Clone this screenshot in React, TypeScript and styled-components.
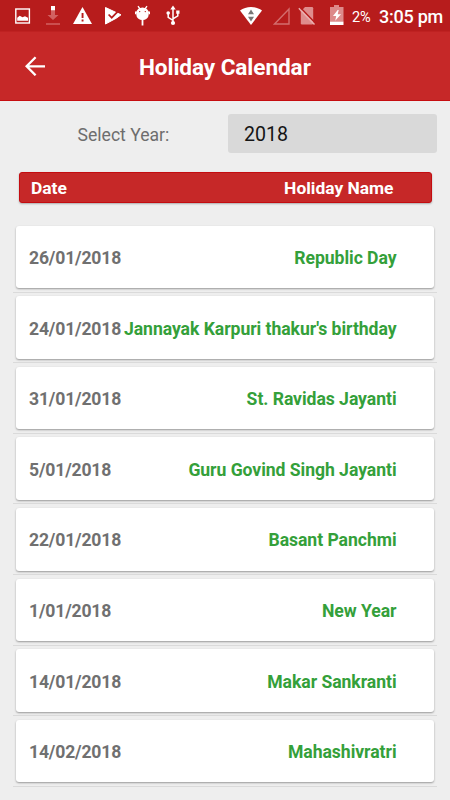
import React from "react";
import styled, { createGlobalStyle } from "styled-components";

const GlobalStyle = createGlobalStyle`
  * { box-sizing: border-box; }
  body { margin: 0; background: #eeeeee; font-family: Roboto, sans-serif; }
`;

const Screen = styled.div`
  width: 450px;
  height: 800px;
  overflow: hidden;
  background: #eeeeee;
`;

const StatusBar = styled.div`
  display: flex;
  align-items: center;
  height: 31px;
  background: #b71c1c;
  color: #fff;
`;

const Glyph = styled.svg<{ $gap: number }>`
  flex: none;
  display: block;
  margin-left: ${(p) => p.$gap}px;
`;

const BatteryText = styled.span`
  width: 20px;
  margin-left: 8px;
  padding-top: 2px;
  font-size: 14.6px;
  letter-spacing: -0.3px;
  white-space: nowrap;
`;

const Clock = styled.span`
  margin-left: 7px;
  padding-top: 2px;
  font-size: 18px;
  font-weight: 500;
  letter-spacing: -0.25px;
  white-space: nowrap;
`;

const AppBar = styled.header`
  display: flex;
  align-items: center;
  height: 70px;
  padding-left: 25px;
  background: #c62828;
  border-bottom: 1px solid #c60d10;
  border-top: 1px solid #bf2121;
`;

const Title = styled.h1`
  margin: 3px 0 0 94px;
  font-size: 22.6px;
  line-height: 28px;
  font-weight: 700;
  letter-spacing: -0.08px;
  color: #fff;
  white-space: nowrap;
`;

const YearRow = styled.div`
  display: flex;
  padding: 13px 13px 0 77.5px;
  height: 71px;
`;

const YearLabel = styled.label`
  width: 150.5px;
  padding-top: 11px;
  font-size: 17.6px;
  line-height: 20px;
  color: #6d6d6d;
`;

const YearField = styled.div`
  width: 209px;
  height: 39px;
  padding-left: 16px;
  border-radius: 3px;
  background: #d9d9d9;
  font-size: 19.6px;
  line-height: 41px;
  color: #151515;
`;

const TableHead = styled.div`
  display: flex;
  justify-content: space-between;
  align-items: center;
  width: 413px;
  height: 31px;
  margin: 0 0 0 18.5px;
  padding: 1px 37px 0 11.5px;
  border: 1px solid #c40c10;
  border-radius: 3px;
  background: #c62828;
  box-shadow: 0 1px 2px rgba(0, 0, 0, 0.28);
  font-size: 17.4px;
  font-weight: 700;
  color: #fff;
`;

const List = styled.div`
  width: 424px;
  margin: 22.7px 0 0 13px;
`;

const Item = styled.div`
  height: 70.6px;
  padding: 0 3px;
`;

const Card = styled.div`
  display: flex;
  justify-content: space-between;
  align-items: center;
  height: 62.6px;
  padding: 2px 37.5px 0 13px;
  border-radius: 3px;
  background: #fff;
  box-shadow: 0 1px 2px rgba(0, 0, 0, 0.36);
  font-size: 17.6px;
  font-weight: 700;
  white-space: nowrap;
`;

const Divider = styled.div`
  height: 1px;
  margin: 3.4px -3px 0;
  background: #dadada;
`;

const DateText = styled.span`
  letter-spacing: -0.17px;
  color: #707070;
`;

const Name = styled.span`
  letter-spacing: -0.05px;
  color: #34a03a;
`;

const holidays: [string, string][] = [
  ["26/01/2018", "Republic Day"],
  ["24/01/2018", "Jannayak Karpuri thakur's birthday"],
  ["31/01/2018", "St. Ravidas Jayanti"],
  ["5/01/2018", "Guru Govind Singh Jayanti"],
  ["22/01/2018", "Basant Panchmi"],
  ["1/01/2018", "New Year"],
  ["14/01/2018", "Makar Sankranti"],
  ["14/02/2018", "Mahashivratri"],
];

const StatusIcons = () => (
  <>
    <Glyph $gap={15} width="16" height="31" viewBox="0 0 16 31">
      <rect x="0.8" y="9" width="13.6" height="14" fill="none" stroke="#fff" strokeWidth="1.4" />
      <path d="M2.2 20.800v-3l2.500-2 2.800 1.500 2.500-1 3 1.500v3z" fill="#fff" />
    </Glyph>
    <Glyph $gap={15} width="14" height="31" viewBox="0 0 14 31">
      <path d="M5 6h4v4.500H5z" fill="#fff" />
      <path d="M5 10.500h4V15h3.500L7 20 1.500 15H5zM0 23.300h14v1.500H0z" fill="#dc7b7b" opacity=".72" />
    </Glyph>
    <Glyph $gap={13} width="19" height="31" viewBox="0 0 19 31">
      <path d="M9.500 7 19 24H0z" fill="#fff" />
      <path d="M8.600 13h1.900v5H8.600zM8.600 19.500h1.900v2H8.600z" fill="#b71c1c" />
    </Glyph>
    <Glyph $gap={13} width="17" height="31" viewBox="0 0 17 31">
      <path d="M0.500 7.500 16 14.800 11.300 18.200 0.500 24z" fill="#fff" stroke="#fff" strokeLinejoin="round" />
      <path d="m3.600 14.500 3.100 3.200 6.500-6.600" fill="none" stroke="#b71c1c" strokeWidth="1.700" />
    </Glyph>
    <Glyph $gap={13} width="15" height="31" viewBox="0 0 15 31">
      <path d="M3 6.200 5 9M12 6.200 10 9" stroke="#fff" strokeWidth="1.300" />
      <path d="M1.300 12.700a6.200 5.300 0 0 1 12.400 0v1.800a6.200 5.500 0 0 1-12.400 0z" fill="#fff" />
      <path d="M1.500 11.500 0 14M13.500 11.500 15 14M7.500 19v6.500" stroke="#fff" strokeWidth="1.800" />
      <circle cx="4.700" cy="11.600" r="0.700" fill="#b71c1c" />
      <circle cx="10.300" cy="11.600" r="0.700" fill="#b71c1c" />
    </Glyph>
    <Glyph $gap={16} width="14" height="31" viewBox="0 0 14 31">
      <path d="M7 23V8M7 20.300 2.200 17.300V13.500M7 18.800l4.800-3V12" fill="none" stroke="#fff" strokeWidth="1.500" />
      <path d="m7 5.500 2.700 4H4.300zM10.200 10.500h3.300v3.300h-3.300z" fill="#fff" />
      <circle cx="2.200" cy="13" r="1.800" fill="#fff" />
      <circle cx="7" cy="23" r="2.100" fill="#fff" />
    </Glyph>
    <Glyph $gap={60} width="22" height="31" viewBox="0 0 22 31">
      <path d="M0 10.500C6 5.800 16 5.800 22 10.500L11 25z" fill="#fff" />
      <path d="m11 9.500 3 4.700H8zM11 21.500l-3-4.700h6z" fill="#777" />
    </Glyph>
    <Glyph $gap={11} width="17" height="31" viewBox="0 0 17 31">
      <path d="M1.500 24 16 9v15z" fill="none" stroke="#d36d6d" strokeWidth="1.400" />
    </Glyph>
    <Glyph $gap={8} width="18" height="31" viewBox="0 0 18 31">
      <path d="M7 7h7q1.200 0 1.200 1.200v15q0 1.200-1.200 1.200H4q-1.200 0-1.200-1.200V11.500z" fill="#df8d8d" />
      <path d="M1.800 7 18 23.800" stroke="#b71c1c" strokeWidth="1.500" />
      <path d="M.8 8.300 16.500 24.600" stroke="#ebb0b0" strokeWidth="1.400" />
    </Glyph>
    <Glyph $gap={14} width="14" height="31" viewBox="0 0 14 31">
      <path d="M4 5h5v2h4.500v14.500H0V7h4z" fill="#dd8a8a" />
      <path d="M0 21.500h13.500V25H0zM7.700 10 3 16h3.200l-1 4.800L11 14.200H7.700l1-4.200z" fill="#fff" />
    </Glyph>
  </>
);

export default function App() {
  return (
    <>
      <GlobalStyle />
      <Screen>
        <StatusBar>
          <StatusIcons />
          <BatteryText>2%</BatteryText>
          <Clock>3:05 pm</Clock>
        </StatusBar>
        <AppBar>
          <Glyph $gap={0} width="20" height="20" viewBox="0 0 20 20">
            <path d="M20 10.300H2M10.600 1.300 1.600 10.300l9 9" fill="none" stroke="#fff" strokeWidth="2.300" />
          </Glyph>
          <Title>Holiday Calendar</Title>
        </AppBar>
        <YearRow>
          <YearLabel>Select Year:</YearLabel>
          <YearField>2018</YearField>
        </YearRow>
        <TableHead>
          <span>Date</span>
          <span>Holiday Name</span>
        </TableHead>
        <List>
          {holidays.map(([date, name]) => (
            <Item key={name}>
              <Card>
                <DateText>{date}</DateText>
                <Name>{name}</Name>
              </Card>
              <Divider />
            </Item>
          ))}
        </List>
      </Screen>
    </>
  );
}
